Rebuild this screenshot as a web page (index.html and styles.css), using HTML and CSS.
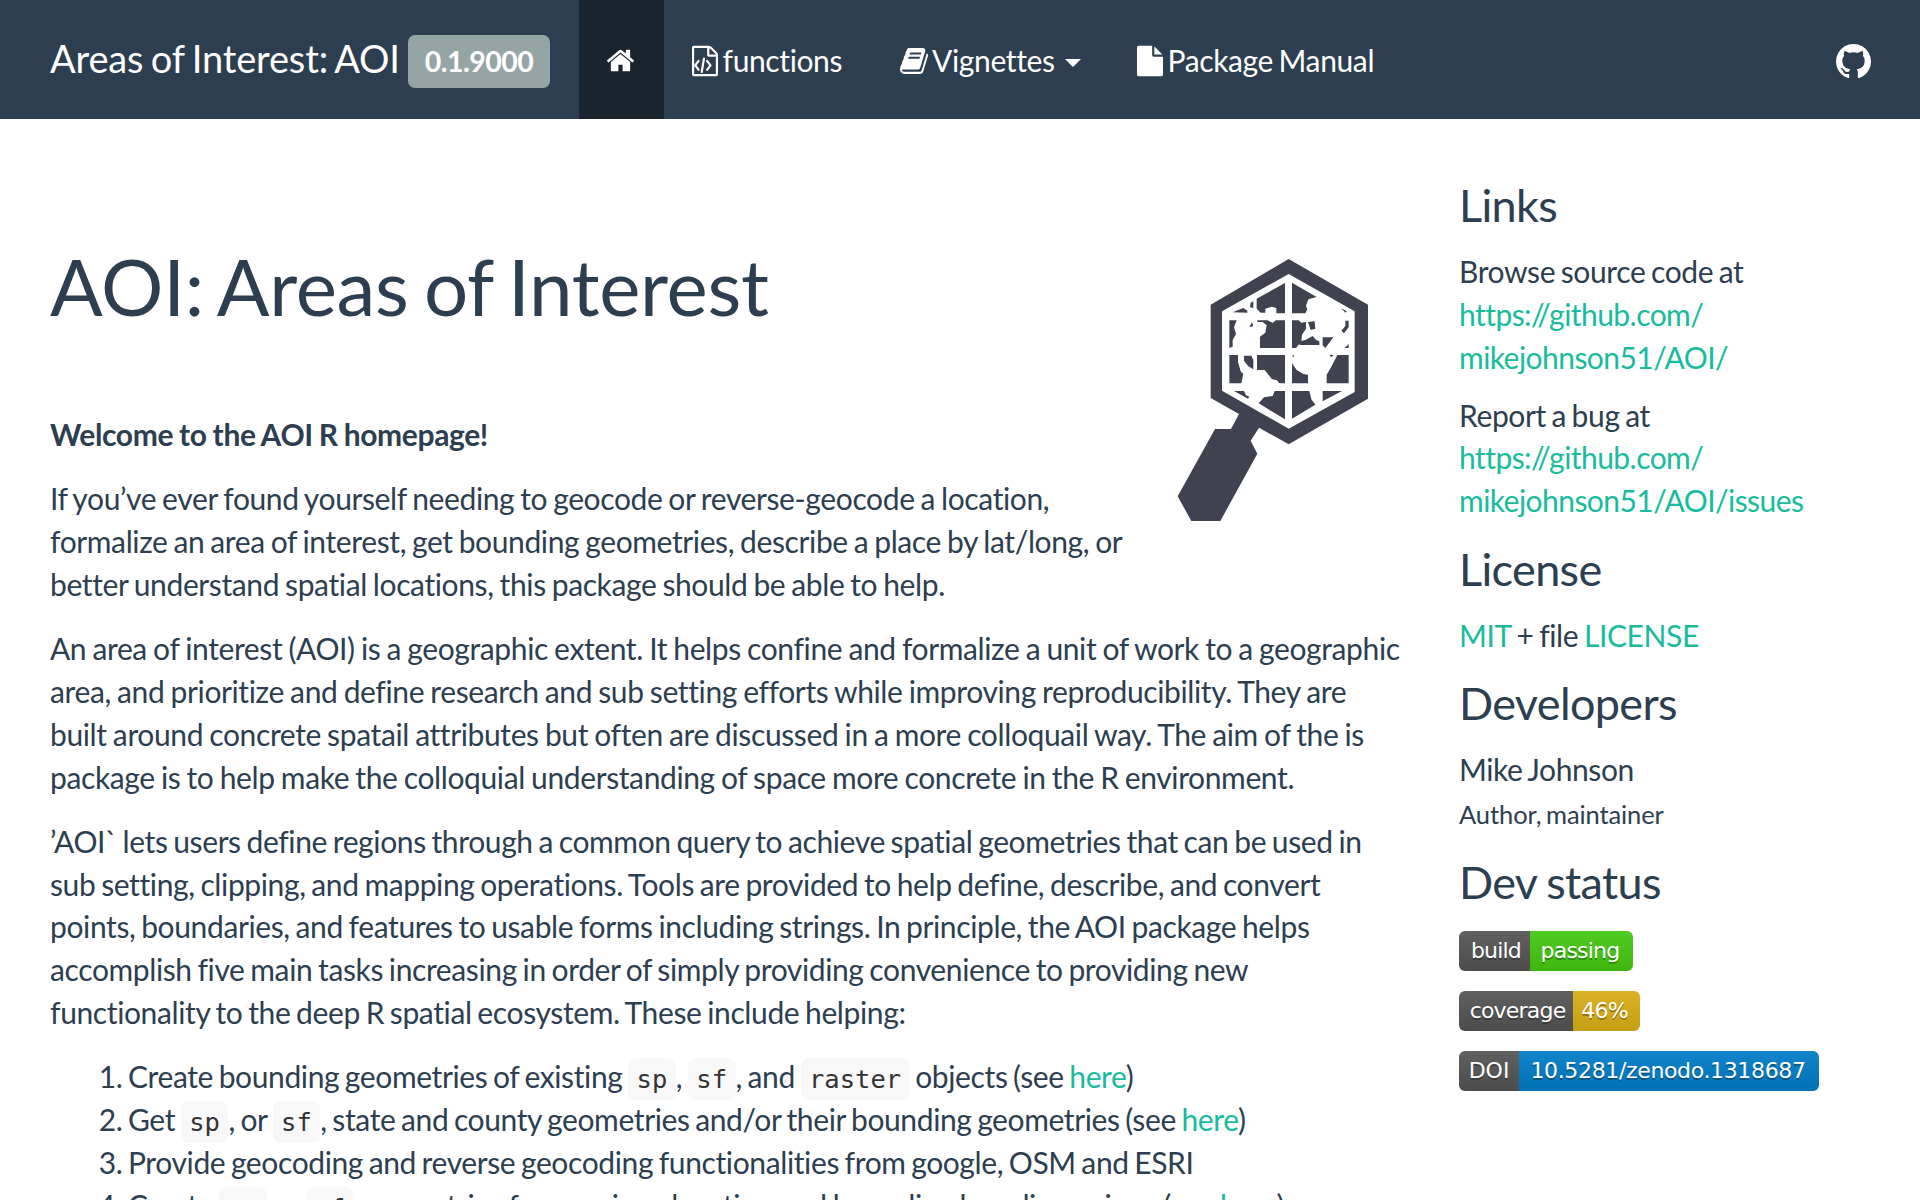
FILE: index.html
```html
<!DOCTYPE html>
<html lang="en">
<head>
<meta charset="utf-8">
<title>Areas of Interest: AOI</title>
<link rel="stylesheet" href="styles.css">
</head>
<body>
<header class="navbar">
  <div class="brand"><span class="brand-name">Areas of Interest: AOI</span><span class="label">0.1.9000</span></div>
  <nav class="nav">
    <a class="nav-item active"><svg class="icon-home" viewBox="90 250 1612 1290"><path d="M1472 992v480q0 26-19 45t-45 19h-384v-384h-256v384h-384q-26 0-45-19t-19-45v-480q0-1 .5-3t.5-3l575-474 575 474q1 2 1 6zm223-69l-62 74q-8 9-21 11h-3q-13 0-21-7l-692-577-692 577q-12 8-24 7-13-2-21-11l-62-74q-8-10-7-23.5t11-21.5l719-599q32-26 76-26t76 26l244 204v-195q0-14 9-23t23-9h192q14 0 23 9t9 23v408l219 182q10 8 11 21.5t-7 23.5z"/></svg></a>
    <a class="nav-item"><svg class="icon-file" viewBox="128 0 1536 1792"><path d="M1596 380q28 28 48 76t20 88v1152q0 40-28 68t-68 28h-1344q-40 0-68-28t-28-68v-1600q0-40 28-68t68-28h896q40 0 88 20t76 48zm-444-244v376h376q-10-29-22-41l-313-313q-12-12-41-22zm384 1528v-1024h-416q-40 0-68-28t-28-68v-416h-768v1536h1280zm-1056-832q8-11 21-12.5t24 6.5l51 38q11 8 12.5 21t-6.5 24l-182 243 182 243q8 11 6.5 24t-12.5 21l-51 38q-11 8-24 6.5t-21-12.5l-226-301q-14-19 0-38zm802 301q14 19 0 38l-226 301q-8 11-21 12.5t-24-6.5l-51-38q-11-8-12.5-21t6.5-24l182-243-182-243q-8-11-6.5-24t12.5-21l51-38q11-8 24-6.5t21 12.5zm-620 461q-13-2-20.5-13t-5.5-24l138-831q2-13 13-20.5t24-5.5l63 10q13 2 20.5 13t5.5 24l-138 831q-2 13-13 20.5t-24 5.5z"/></svg><span>functions</span></a>
    <a class="nav-item"><svg class="icon-book" viewBox="64 128 1664 1536"><path d="M1703 478q40 57 18 129l-275 906q-19 64-76.5 107.5t-122.5 43.5h-923q-77 0-148.5-53.5t-99.5-131.5q-24-67-2-127 0-4 3-27t4-37q1-8-3-21.5t-3-19.5q2-11 8-21t16.5-23.5 16.5-23.5q23-38 45-91.5t30-91.5q3-10 .5-30t-.5-28q3-11 17-28t17-23q21-36 42-92t25-90q1-9-2.5-32t.5-28q4-13 22-30.5t22-22.5q19-26 42.5-84.5t27.5-96.5q1-8-3-25.5t-2-26.5q2-8 9-18t18-23 17-21q8-12 16.5-30.5t15-35 16-36 19.5-32 26.5-23.5 36-11.5 47.5 5.5l-1 3q38-9 51-9h761q74 0 114 56t18 130l-274 906q-36 119-71.5 153.5t-128.5 34.5h-869q-27 0-38 15-11 16-1 43 24 70 144 70h923q29 0 56-15.5t35-41.5l300-987q7-22 5-57 38 15 59 43zm-1064 2q-4 13 2 22.5t20 9.5h608q13 0 25.5-9.5t16.5-22.5l21-64q4-13-2-22.5t-20-9.5h-608q-13 0-25.5 9.5t-16.5 22.5zm-83 256q-4 13 2 22.5t20 9.5h608q13 0 25.5-9.5t16.5-22.5l21-64q4-13-2-22.5t-20-9.5h-608q-13 0-25.5 9.5t-16.5 22.5z"/></svg><span>Vignettes</span><i class="caret"></i></a>
    <a class="nav-item"><svg class="icon-file" viewBox="128 0 1536 1792"><path d="M1152 512v-472q22 14 36 28l408 408q14 14 28 36h-472zm-128 32q0 40 28 68t68 28h544v1056q0 40-28 68t-68 28h-1344q-40 0-68-28t-28-68v-1600q0-40 28-68t68-28h800v544z"/></svg><span>Package Manual</span></a>
  </nav>
  <a class="github"><svg class="icon-github" viewBox="128 128 1536 1500"><path d="M896 128q209 0 385.5 103t279.5 279.5 103 385.5q0 251-146.5 451.5t-378.5 277.5q-27 5-40-7t-13-30q0-3 .5-76.5t.5-134.5q0-97-52-142 57-6 102.5-18t94-39 81-66.5 53-105 20.5-150.5q0-119-79-206 37-91-8-204-28-9-81 11t-92 44l-38 24q-93-26-192-26t-192 26q-16-11-42.5-27t-83.5-38.5-85-13.5q-45 113-8 204-79 87-79 206 0 85 20.5 150t52.5 105 80.5 67 94 39 102.5 18q-39 36-49 103-21 10-45 15t-57 5-65.5-21.5-55.5-62.5q-19-32-48.5-52t-49.5-24l-20-3q-21 0-29 4.5t-5 11.5 9 14 13 12l7 5q22 10 43.5 38t31.5 51l10 23q13 38 44 61.5t67 30 69.5 7 55.5-3.5l23-4q0 38 .5 88.5t.5 54.5q0 18-13 30t-40 7q-232-77-378.5-277.5t-146.5-451.5q0-209 103-385.5t279.5-279.5 385.5-103z"/></svg></a>
</header>
<div class="page">
  <main class="content">
    <svg class="logo" viewBox="0 0 690 900">
      <path class="ink" d="M386 57 624 194V476L386 613 297 563 272 602 292 641 181 843H94L53 769 165 567H213L237 522 152 474V194Z"/>
      <path class="land" d="M386 102 584 214V456L386 566 186 452V214Z"/>
      <path class="ink" d="M375 129V220H349V204L335 200 316 206V218H302L290 206V176ZM396 128 470 171 445 178 438 198 442 208 436 220H396ZM218 217 250 204 262 212V218ZM272 188 280 184V204L270 202ZM544 205 560 214 556 218ZM208 241H230L222 262 228 282 218 300V320L208 324ZM292 241H322L338 248 348 241H375V324H300V290L316 278 320 256 308 246H292ZM268 262 276 246 280 258ZM396 241H416L424 248 438 246V266L426 284 424 304 408 324H396ZM444 246 464 244 466 266 452 270ZM436 300 458 288 468 300 478 304V315H418L420 304ZM488 292H520L508 308 496 324 488 316ZM544 272 556 258V242H566V262L552 280ZM554 324 566 312V324ZM208 345H234V366L242 394 250 402 244 430H208ZM252 347H274L280 360V388L264 378 252 362ZM291 345H375V430H358L350 420 336 418 314 390H291ZM398 345 404 348 398 352ZM396 370 410 390 430 402 444 404V430H396ZM508 345H520L514 352ZM532 345H566V430H500V404L514 380ZM222 453H252L258 466 268 470 264 476ZM344 453H375V538L296 490 312 472 338 468ZM396 453H448L454 478 466 494 396 536ZM488 453H546L488 484Z"/>
    </svg>
    <h1>AOI: Areas of Interest</h1>
    <p><strong>Welcome to the AOI R homepage!</strong></p>
    <p class="intro">If you’ve ever found yourself needing to geocode or reverse-geocode a location,<br>
      formalize an area of interest, get bounding geometries, describe a place by lat/long, or<br>
      better understand spatial locations, this package should be able to help.</p>
    <p class="definition">An area of interest (AOI) is a geographic extent. It helps confine and formalize a unit of work to a geographic<br>
      area, and prioritize and define research and sub setting efforts while improving reproducibility. They are<br>
      built around concrete spatail attributes but often are discussed in a more colloquail way. The aim of the is<br>
      package is to help make the colloquial understanding of space more concrete in the R environment.</p>
    <p class="overview">’AOI` lets users define regions through a common query to achieve spatial geometries that can be used in<br>
      sub setting, clipping, and mapping operations. Tools are provided to help define, describe, and convert<br>
      points, boundaries, and features to usable forms including strings. In principle, the AOI package helps<br>
      accomplish five main tasks increasing in order of simply providing convenience to providing new<br>
      functionality to the deep R spatial ecosystem. These include helping:</p>
    <ol>
      <li>Create bounding geometries of existing <code>sp</code>, <code>sf</code>, and <code>raster</code> objects (see <a>here</a>)</li>
      <li>Get <code>sp</code>, or <code>sf</code>, state and county geometries and/or their bounding geometries (see <a>here</a>)</li>
      <li>Provide geocoding and reverse geocoding functionalities from google, OSM and ESRI</li>
      <li>Create <code>sp</code> or <code>sf</code> geometries from a given location and bounding box dimensions (see <a>here</a>)</li>
    </ol>
  </main>
  <aside class="sidebar">
    <h2>Links</h2>
    <p>Browse source code at<br><a class="url">https://github.com/<br>mikejohnson51/AOI/</a></p>
    <p>Report a bug at<br><a class="url">https://github.com/<br>mikejohnson51/AOI/issues</a></p>
    <h2>License</h2>
    <p><a>MIT</a> + file <a>LICENSE</a></p>
    <h2>Developers</h2>
    <p class="person">Mike Johnson<br><small>Author, maintainer</small></p>
    <h2>Dev status</h2>
    <div class="badges">
      <div class="badge build"><span>build</span><b>passing</b></div>
      <div class="badge coverage"><span>coverage</span><b>46%</b></div>
      <div class="badge doi"><span>DOI</span><b>10.5281/zenodo.1318687</b></div>
    </div>
  </aside>
</div>
</body>
</html>
```
FILE: styles.css
```css
* { box-sizing: border-box; }
html, body { height: 1200px; overflow: hidden; }
body { margin: 0; background: #fff; color: #2c3e50; font: 30px/42.86px Lato, "Open Sans", sans-serif; letter-spacing: -.38px; word-spacing: -1.7px; }
a { color: #18bc9c; }
svg { fill: currentColor; flex: none; display: block; }

.navbar { display: flex; height: 119px; padding: 0 49px 0 50px; background: #2c3e50; color: #fff; }
.navbar a { color: #fff; }
.brand { display: flex; align-items: flex-start; width: 529px; }
.brand-name { width: 358px; font-size: 38px; line-height: 117px; letter-spacing: -.15px; word-spacing: -2.1px; white-space: nowrap; }
.label { width: 142px; height: 53px; margin-top: 35px; border-radius: 7px; background: #95a5a6; font-size: 28.5px; font-weight: 700; line-height: 53px; letter-spacing: -.5px; text-align: center; }
.nav { display: flex; }
.nav-item { display: flex; align-items: center; padding: 2px 28px 0; line-height: 40px; white-space: nowrap; }
.nav-item span { margin-top: -2px; }
.active { width: 84.5px; background: #1a242f; }
.icon-home { width: 27px; height: 23px; }
.icon-file { width: 26px; height: 32px; margin-right: 5px; }
.icon-book { width: 28px; height: 28px; margin: 0 4px 0 2px; }
.caret { width: 0; height: 0; margin: 5px 0 0 10px; border: 8px solid transparent; border-top-color: #fff; border-bottom: 0; }
.github { margin-left: auto; padding-top: 43px; }
.icon-github { width: 35px; height: 36px; }

.page { display: flex; gap: 54px; padding: 0 50px; }
.content { width: 1355px; white-space: nowrap; }
.logo { float: right; width: 230px; height: 300px; margin: 121px 15px 0 20px; }
.logo .ink { fill: #40424f; }
.logo .land { fill: #fff; }
h1 { margin: 120px 0 80px; font-size: 78px; font-weight: 400; line-height: 94px; letter-spacing: -.3px; word-spacing: -4.2px; }
p { margin: 0 0 21.3px; }
strong { word-spacing: -.9px; }
.intro { word-spacing: -1.35px; }
.definition { word-spacing: -1.1px; }
.overview { word-spacing: -1.55px; }
ol { margin: 0; padding-left: 78px; }
li:last-child { word-spacing: -1.1px; }
code { padding: 6px 8.5px; border-radius: 8px; background: #f8f8f8; color: #333; font: 25.5px "DejaVu Sans Mono", monospace; letter-spacing: 0; }

.sidebar { width: 400px; padding-top: 39.4px; }
.sidebar h2 { margin: 21.6px 0 20px; font-size: 45px; font-weight: 400; line-height: 50px; letter-spacing: -.65px; word-spacing: -1px; }
.sidebar p { margin: 0 0 15px; }
.sidebar .person { margin-bottom: -1px; }
.url { letter-spacing: -.55px; }
small { font-size: 25.5px; letter-spacing: -.1px; }
.badges { display: flex; flex-direction: column; align-items: flex-start; gap: 20px; padding-top: 4px; }
.badge { display: flex; height: 40px; border-radius: 6px; overflow: hidden; color: #fff; font: 22px/40px "DejaVu Sans", sans-serif; letter-spacing: -.8px; text-align: center; text-shadow: 0 2px 0 rgba(1, 1, 1, .3); }
.badge span { padding-left: 3px; background: linear-gradient(#606060, #4c4c4c); }
.badge b { font-weight: 400; }
.build span { width: 71px; }
.build b { width: 103px; padding-right: 3px; background: linear-gradient(#50cb22, #3eb60e); }
.coverage span { width: 114px; }
.coverage b { width: 67px; padding-right: 4px; background: linear-gradient(#dab226, #c69e12); }
.doi span { width: 60px; padding-left: 0; letter-spacing: 0; }
.doi b { width: 300px; padding-right: 2px; letter-spacing: -.35px; background: linear-gradient(#1284ca, #0070b4); }
```
